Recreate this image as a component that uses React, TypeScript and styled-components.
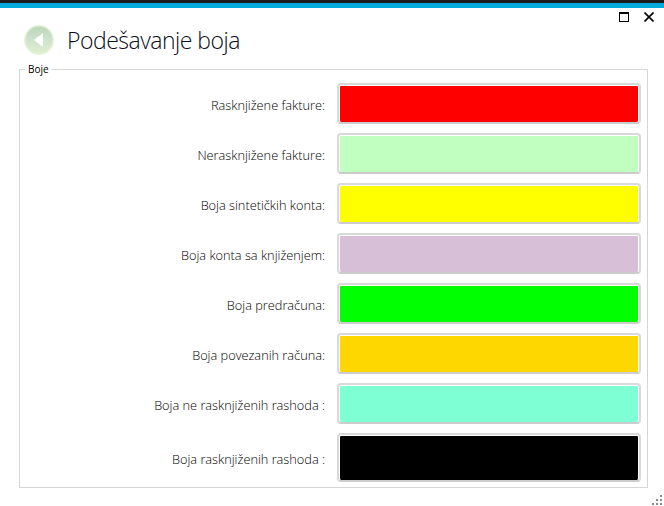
import React from "react";
import styled, { createGlobalStyle } from "styled-components";

const colorRows = [
  { label: "Rasknjižene fakture:", color: "#ff0000" },
  { label: "Nerasknjižene fakture:", color: "#c0ffc0" },
  { label: "Boja sintetičkih konta:", color: "#ffff00" },
  { label: "Boja konta sa knjiženjem:", color: "#d8bfd8" },
  { label: "Boja predračuna:", color: "#00ff00" },
  { label: "Boja povezanih računa:", color: "#ffd700" },
  { label: "Boja ne rasknjiženih rashoda :", color: "#7fffd4" },
  { label: "Boja rasknjiženih rashoda :", color: "#000000", tall: true },
];

function BackIcon() {
  return (
    <svg width="32" height="32" viewBox="0 0 32 32">
      <defs>
        <linearGradient id="backFill" x1="0" y1="0" x2="0" y2="1">
          <stop offset="0" stopColor="#bcd6b8" />
          <stop offset="0.5" stopColor="#cfe3cc" />
          <stop offset="1" stopColor="#def0cf" />
        </linearGradient>
      </defs>
      <circle cx="16" cy="16" r="15" fill="#e6f2dc" />
      <circle cx="16" cy="16" r="13.5" fill="url(#backFill)" />
      <path d="M11 16 L20 9 V23 Z" fill="#ffffff" />
    </svg>
  );
}

function MaximizeIcon() {
  return (
    <svg width="10" height="10" viewBox="0 0 10 10">
      <rect x="0.5" y="0.5" width="9" height="9" fill="none" stroke="#000" strokeWidth="1" />
      <rect x="0" y="0" width="10" height="2" fill="#000" />
    </svg>
  );
}

function CloseIcon() {
  return (
    <svg width="10" height="10" viewBox="0 0 10 10">
      <path d="M0.5 0.5 L9.5 9.5 M9.5 0.5 L0.5 9.5" stroke="#000" strokeWidth="1.6" fill="none" />
    </svg>
  );
}

function GripIcon() {
  return (
    <svg width="10" height="10" viewBox="0 0 10 10">
      <g fill="#8a8a8a">
        <rect x="8" y="0" width="2" height="2" />
        <rect x="4" y="4" width="2" height="2" />
        <rect x="8" y="4" width="2" height="2" />
        <rect x="0" y="8" width="2" height="2" />
        <rect x="4" y="8" width="2" height="2" />
        <rect x="8" y="8" width="2" height="2" />
      </g>
    </svg>
  );
}

export default function App() {
  return (
    <Window>
      <GlobalStyle />
      <TopStrip />
      <WindowControls>
        <ControlButton>
          <MaximizeIcon />
        </ControlButton>
        <ControlButton>
          <CloseIcon />
        </ControlButton>
      </WindowControls>
      <TitleRow>
        <BackButton>
          <BackIcon />
        </BackButton>
        <Title>Podešavanje boja</Title>
      </TitleRow>
      <Group>
        <GroupLegend>Boje</GroupLegend>
        <RowList>
          {colorRows.map((row) => (
            <ColorRow key={row.label} $tall={row.tall}>
              <RowLabel>{row.label}</RowLabel>
              <Swatch $color={row.color} />
            </ColorRow>
          ))}
        </RowList>
      </Group>
      <Footer>
        <GripIcon />
      </Footer>
    </Window>
  );
}

const GlobalStyle = createGlobalStyle`
  html, body {
    margin: 0;
    padding: 0;
    background: #ffffff;
  }
  * {
    box-sizing: border-box;
  }
`;

const Window = styled.div`
  width: 664px;
  height: 506px;
  overflow: hidden;
  background: #ffffff;
  font-family: "Open Sans", "Liberation Sans", sans-serif;
  display: flex;
  flex-direction: column;
`;

const TopStrip = styled.div`
  height: 8px;
  background: #00aadc;
  border-top: 3px solid #1c1c1c;
`;

const WindowControls = styled.div`
  height: 16px;
  display: flex;
  justify-content: flex-end;
  align-items: flex-end;
  gap: 15px;
  padding-right: 10px;
  padding-bottom: 2px;
`;

const ControlButton = styled.div`
  width: 10px;
  height: 10px;
  display: flex;
`;

const TitleRow = styled.div`
  height: 32px;
  display: flex;
  align-items: center;
  gap: 12px;
  padding-left: 23px;
`;

const BackButton = styled.div`
  width: 32px;
  height: 32px;
  display: flex;
`;

const Title = styled.h1`
  margin: 0;
  font-size: 23px;
  font-weight: 300;
  letter-spacing: -0.5px;
  color: #0c0c1c;
  line-height: 32px;
`;

const Group = styled.fieldset`
  margin: 7px 16px 0 19px;
  padding: 0 6px 0 0;
  height: 425px;
  border: 1px solid #d6d6d6;
  min-inline-size: 0;
`;

const GroupLegend = styled.legend`
  margin-left: 5px;
  padding: 0 3px;
  font-family: "Open Sans", "Liberation Sans", sans-serif;
  font-size: 10px;
  line-height: 12px;
  color: #000000;
`;

const RowList = styled.div`
  display: flex;
  flex-direction: column;
  gap: 9px;
  padding-top: 8px;
`;

const ColorRow = styled.div<{ $tall?: boolean }>`
  display: grid;
  grid-template-columns: 1fr 304px;
  align-items: stretch;
  column-gap: 12px;
  height: ${(p) => (p.$tall ? "49px" : "41px")};
`;

const RowLabel = styled.span`
  display: flex;
  align-items: center;
  justify-content: flex-end;
  padding-top: 3px;
  font-size: 12.75px;
  font-weight: 300;
  color: #000000;
`;

const Swatch = styled.div<{ $color: string }>`
  border: 2px solid #d9d9d9;
  border-bottom-color: #cccccc;
  border-radius: 4px;
  padding: 1px 1px 0;
  background: ${(p) => p.$color};
  background-clip: content-box;
`;

const Footer = styled.div`
  display: flex;
  justify-content: flex-end;
  padding: 7px 2px 0 0;
`;
